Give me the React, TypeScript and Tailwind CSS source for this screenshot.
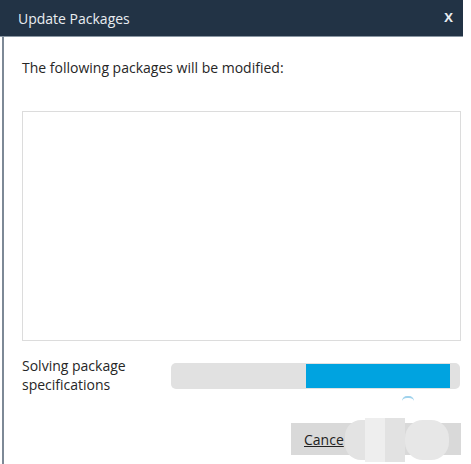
import React from "react";

const App = () => {
  return (
    <div
      className="w-[471px] h-[464px] bg-white overflow-hidden"
      style={{ fontFamily: '"Open Sans", "DejaVu Sans", sans-serif' }}
    >
      <div className="w-[463px] h-[464px] flex flex-col">
        {/* Title bar */}
        <div className="h-[37px] bg-[#223345] flex items-center justify-between pl-[18px] pr-[10px] border-b border-[#8a97a3]">
          <span className="text-[14px] text-[#e9edf1]">Update Packages</span>
          <span className="text-[13px] font-bold text-[#e9edf1]">X</span>
        </div>

        {/* Body */}
        <div className="relative flex-1 ml-[2px] border-l-2 border-[#7d8996] pl-[18px] pr-[2px] flex flex-col">
          <p className="mt-[21px] text-[14px] text-[#262626] leading-[19px]">
            The following packages will be modified:
          </p>

          <div className="mt-[34px] h-[230px] border border-[#dcdcdc] bg-white" />

          <div className="mt-[15px] flex items-start">
            <div className="w-[149px] text-[14px] leading-[19px] text-[#262626]">
              Solving package
              <br />
              specifications
            </div>
            <div className="mt-[7px] w-[289px] h-[26px] rounded-[5px] bg-[#e1e1e1] flex items-center pl-[135px] pr-[10px]">
              <div className="h-[24px] flex-1 bg-[#00a3e0]" />
            </div>
          </div>

          <div className="mt-[29px] flex justify-end">
            <button className="w-[170px] h-[32px] bg-[#d9d9d9] text-left pl-[13px] text-[14px] text-[#222]">
              <span className="underline">Cance</span>
            </button>
          </div>

          {/* small spinner arc */}
          <div className="absolute left-[398px] top-[359px] w-[12px] h-[5px] border-t-2 border-[#9fd2ec] rounded-t-full" />

          {/* faded watermark over button */}
          <div className="absolute left-[341px] top-[381px] w-[112px] h-[44px] flex items-center">
            <div className="w-[20px] h-[40px] rounded-l-[16px] bg-[#e3e3e3]" />
            <div className="w-[20px] h-[44px] bg-[#eeeeee]" />
            <div className="w-[20px] h-[44px] bg-[#e2e2e2]" />
            <div className="w-[44px] h-[40px] rounded-[18px] bg-[#e7e7e7]" />
          </div>
        </div>
      </div>
    </div>
  );
};

export default App;
